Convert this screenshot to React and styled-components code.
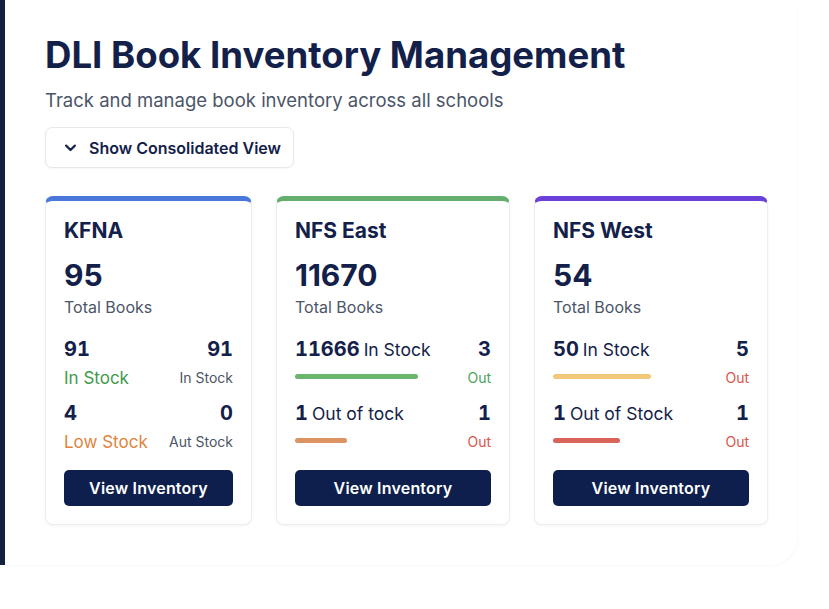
import styled, { createGlobalStyle } from "styled-components";

const GlobalStyle = createGlobalStyle`
  body {
    margin: 0;
    background: #ffffff;
    font-family: Inter, "Noto Sans", sans-serif;
    color: #13214a;
  }
`;

const navy = "#13214a";

// Page shell
const Shell = styled.div`
  display: flex;
  width: 829px;
  height: 609px;
  align-items: flex-start;
`;

const SideBar = styled.div`
  width: 5px;
  height: 565px;
  background: #13213f;
  flex-shrink: 0;
`;

const Main = styled.main`
  width: 792px;
  height: 565px;
  box-sizing: border-box;
  padding: 33px 0 0 40px;
  border-bottom-right-radius: 28px;
  box-shadow: 1px 2px 2px rgba(20, 30, 60, 0.02);
`;

const Title = styled.h1`
  margin: 0;
  font-size: 36.6px;
  line-height: 44px;
  font-weight: 700;
  color: ${navy};
`;

const Subtitle = styled.p`
  margin: 11px 0 0;
  font-size: 18.5px;
  line-height: 24px;
  color: #4b5568;
`;

const ToggleButton = styled.button`
  display: flex;
  align-items: center;
  gap: 11px;
  margin-top: 15px;
  height: 41px;
  box-sizing: border-box;
  padding: 0 12px 0 17px;
  background: #fff;
  border: 1px solid #e6e8ee;
  border-radius: 7px;
  box-shadow: 0 1px 2px rgba(20, 30, 60, 0.04);
  font-family: inherit;
  font-size: 16px;
  font-weight: 600;
  white-space: nowrap;
  color: ${navy};
  cursor: pointer;
`;

// Cards
const Cards = styled.div`
  display: flex;
  gap: 24px;
  margin-top: 28px;
`;

const Card = styled.section`
  width: ${(p) => p.$width}px;
  flex-shrink: 0;
  box-sizing: border-box;
  background: #fff;
  border: 1px solid #eceef3;
  border-top: 5px solid ${(p) => p.$accent};
  border-radius: 8px;
  box-shadow: 0 1px 3px rgba(20, 30, 60, 0.05);
  padding: 16px 18px 18px 18px;
  display: flex;
  flex-direction: column;
`;

const SchoolName = styled.h2`
  margin: 0;
  font-size: 21px;
  line-height: 28px;
  font-weight: 700;
  color: ${navy};
`;

const Total = styled.div`
  margin-top: 12px;
  font-size: 30px;
  line-height: 36px;
  font-weight: 700;
  color: ${navy};
`;

const TotalLabel = styled.div`
  margin-top: 3px;
  font-size: 16px;
  line-height: 22px;
  color: #4b5568;
`;

const Stats = styled.div`
  margin-top: 18px;
  display: flex;
  flex-direction: column;
  gap: 9px;
`;

const Stat = styled.div`
  display: grid;
  grid-template-columns: 1fr auto;
  grid-template-rows: 26px 26px;
  row-gap: 3px;
  align-items: center;
`;

const Num = styled.span`
  font-size: 20px;
  line-height: 26px;
  font-weight: 700;
  font-variant-numeric: tabular-nums;
  color: ${navy};
`;

const Inline = styled.span`
  font-size: 17.5px;
  line-height: 26px;
  font-weight: 400;
  color: ${navy};
  margin-left: 4px;
`;

const Right = styled.div`
  text-align: right;
`;

const Label = styled.span`
  font-size: ${(p) => (p.$big ? 17 : 14)}px;
  line-height: 26px;
  color: ${(p) => p.$color || "#4b5568"};
`;

const Bar = styled.div`
  height: 5px;
  border-radius: 3px;
  background: ${(p) => p.$color};
  align-self: center;
  margin-top: -4px;
`;

const ViewButton = styled.button`
  margin-top: 15px;
  height: 36px;
  width: 100%;
  border: none;
  border-radius: 5px;
  background: #0e1f4d;
  color: #fff;
  font-family: inherit;
  font-size: 16px;
  font-weight: 600;
  letter-spacing: 0.2px;
  cursor: pointer;
`;

function Chevron() {
  return (
    <svg width="15" height="15" viewBox="0 0 24 24" fill="none" stroke={navy} strokeWidth="3.4" strokeLinecap="round" strokeLinejoin="round">
      <path d="M5 9l7 7 7-7" />
    </svg>
  );
}

function BarStat({ num, text, right, rightColor, bar, barColor }) {
  return (
    <Stat>
      <div>
        <Num>{num}</Num>
        <Inline>{text}</Inline>
      </div>
      <Right>
        <Num>{right}</Num>
      </Right>
      <Bar style={{ width: bar }} $color={barColor} />
      <Right>
        <Label $color={rightColor}>Out</Label>
      </Right>
    </Stat>
  );
}

export default function App() {
  return (
    <>
      <GlobalStyle />
      <Shell>
        <SideBar />
        <Main>
          <Title>DLI Book Inventory Management</Title>
          <Subtitle>Track and manage book inventory across all schools</Subtitle>
          <ToggleButton>
            <Chevron />
            Show Consolidated View
          </ToggleButton>

          <Cards>
            {/* KFNA */}
            <Card $accent="#4a78da" $width={207}>
              <SchoolName>KFNA</SchoolName>
              <Total>95</Total>
              <TotalLabel>Total Books</TotalLabel>
              <Stats>
                <Stat>
                  <Num>91</Num>
                  <Right>
                    <Num>91</Num>
                  </Right>
                  <Label $big $color="#3f9a4c">In Stock</Label>
                  <Right>
                    <Label>In Stock</Label>
                  </Right>
                </Stat>
                <Stat>
                  <Num>4</Num>
                  <Right>
                    <Num>0</Num>
                  </Right>
                  <Label $big $color="#e0843e">Low Stock</Label>
                  <Right>
                    <Label>Aut Stock</Label>
                  </Right>
                </Stat>
              </Stats>
              <ViewButton>View Inventory</ViewButton>
            </Card>

            {/* NFS East */}
            <Card $accent="#64ae6e" $width={234}>
              <SchoolName>NFS East</SchoolName>
              <Total>11670</Total>
              <TotalLabel>Total Books</TotalLabel>
              <Stats>
                <BarStat num="11666" text="In Stock" right="3" rightColor="#4ba35a" bar={123} barColor="#6cb56c" />
                <BarStat num="1" text="Out of tock" right="1" rightColor="#d9544a" bar={52} barColor="#dd9262" />
              </Stats>
              <ViewButton>View Inventory</ViewButton>
            </Card>

            {/* NFS West */}
            <Card $accent="#6a40d8" $width={234}>
              <SchoolName>NFS West</SchoolName>
              <Total>54</Total>
              <TotalLabel>Total Books</TotalLabel>
              <Stats>
                <BarStat num="50" text="In Stock" right="5" rightColor="#d9544a" bar={98} barColor="#f0c877" />
                <BarStat num="1" text="Out of Stock" right="1" rightColor="#d9544a" bar={67} barColor="#d9655a" />
              </Stats>
              <ViewButton>View Inventory</ViewButton>
            </Card>
          </Cards>
        </Main>
      </Shell>
    </>
  );
}
